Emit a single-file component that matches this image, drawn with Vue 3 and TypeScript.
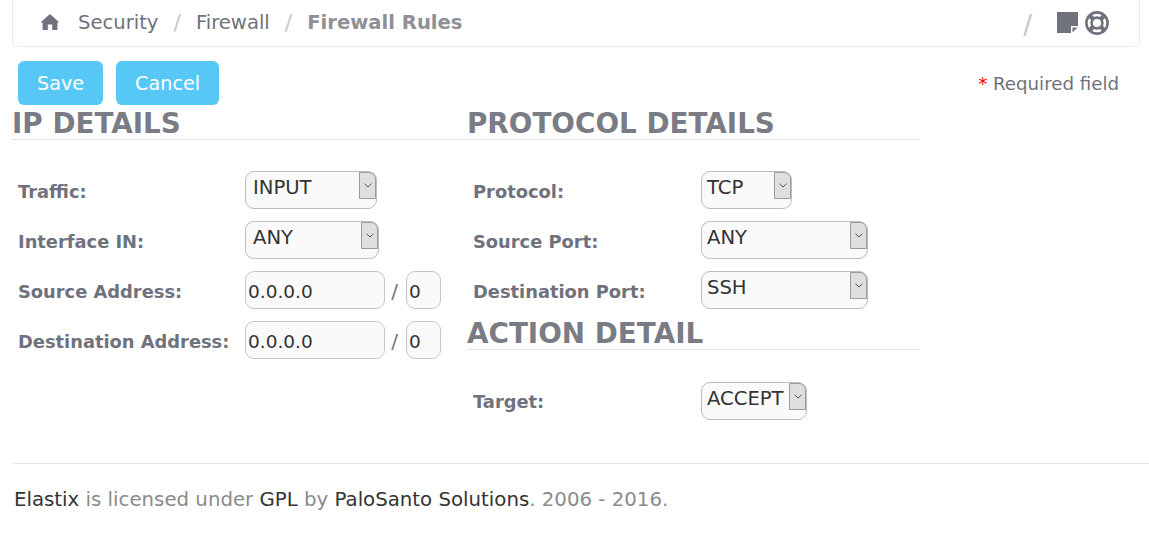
<script setup lang="ts">
interface Row { label: string; kind: 'select' | 'ip'; value: string; width?: number }
const ipRows: Row[] = [
  { label: 'Traffic:', kind: 'select', value: 'INPUT', width: 132 },
  { label: 'Interface IN:', kind: 'select', value: 'ANY', width: 134 },
  { label: 'Source Address:', kind: 'ip', value: '0.0.0.0' },
  { label: 'Destination Address:', kind: 'ip', value: '0.0.0.0' },
]
const protoRows: Row[] = [
  { label: 'Protocol:', kind: 'select', value: 'TCP', width: 91 },
  { label: 'Source Port:', kind: 'select', value: 'ANY', width: 167 },
  { label: 'Destination Port:', kind: 'select', value: 'SSH', width: 167 },
]
const actionRows: Row[] = [{ label: 'Target:', kind: 'select', value: 'ACCEPT', width: 106 }]
const sections = [
  { items: [{ title: 'IP DETAILS', rows: ipRows }] },
  { items: [{ title: 'PROTOCOL DETAILS', rows: protoRows }, { title: 'ACTION DETAIL', rows: actionRows }] },
]
</script>

<template>
  <div class="page">
    <header class="crumbs">
      <svg class="home" viewBox="0 0 20 18" width="20" height="18" aria-hidden="true">
        <path d="M10 1 L19.5 9.6 L17.4 9.6 L17.4 17 L12.2 17 L12.2 11.4 L7.8 11.4 L7.8 17 L2.6 17 L2.6 9.6 L0.5 9.6 Z" fill="#6f727d" />
      </svg>
      <span class="crumb">Security</span><span class="sep">/</span>
      <span class="crumb">Firewall</span><span class="sep">/</span>
      <strong class="current">Firewall Rules</strong>
      <span class="tools">
        <span class="sep tool-sep">/</span>
        <svg viewBox="0 0 21 21" width="21" height="21" aria-hidden="true">
          <path d="M0 0 H21 V14 H14 V21 H0 Z" fill="#6f727d" />
          <path d="M15.5 20.5 V15.5 H20.5 Z" fill="#6f727d" />
        </svg>
        <svg viewBox="0 0 24 24" width="24" height="24" aria-hidden="true">
          <circle cx="12" cy="12" r="10.6" fill="none" stroke="#6f727d" stroke-width="2.6" />
          <circle cx="12" cy="12" r="5.4" fill="none" stroke="#6f727d" stroke-width="2.6" />
          <path d="M4.5 4.5 L8.5 8.5 M19.5 4.5 L15.5 8.5 M4.5 19.5 L8.5 15.5 M19.5 19.5 L15.5 15.5" stroke="#6f727d" stroke-width="4.4" />
        </svg>
      </span>
    </header>

    <div class="actions">
      <button class="btn save">Save</button>
      <button class="btn">Cancel</button>
      <span class="required"><span class="star">*</span> Required field</span>
    </div>

    <main class="form">
      <section v-for="(col, c) in sections" :key="c" class="col" :class="{ right: c === 1 }">
        <div v-for="group in col.items" :key="group.title" class="group">
          <h2 class="title">{{ group.title }}</h2>
          <div class="rows">
            <div v-for="row in group.rows" :key="row.label" class="row">
              <label class="label">{{ row.label }}</label>
              <div v-if="row.kind === 'select'" class="select" :style="{ width: row.width + 'px' }">
                <span class="select-text">{{ row.value }}</span>
                <span class="arrow">
                  <svg viewBox="0 0 8 5" width="8" height="5" aria-hidden="true">
                    <path d="M0.5 0.7 L4 4 L7.5 0.7" fill="none" stroke="#555" stroke-width="1" />
                  </svg>
                </span>
              </div>
              <div v-else class="ip">
                <span class="input wide">{{ row.value }}</span>
                <span class="slash">/</span>
                <span class="input mask">0</span>
              </div>
            </div>
          </div>
        </div>
      </section>
    </main>

    <footer class="footer">
      <a>Elastix</a> is licensed under <a>GPL</a> by <a>PaloSanto Solutions</a>. 2006 - 2016.
    </footer>
  </div>
</template>

<style>
html, body { margin: 0; background: #fff; }
</style>

<style scoped>
.page {
  width: 1149px;
  height: 533px;
  overflow: hidden;
  font-family: "DejaVu Sans", Verdana, sans-serif;
  font-size: 18px;
  color: #6f727d;
  box-sizing: border-box;
}
.crumbs {
  display: flex;
  align-items: center;
  box-sizing: border-box;
  width: 1128px;
  height: 47px;
  margin-left: 12px;
  padding: 0 30px 1px 27px;
  border: 1px solid #ececec;
  border-top: none;
  border-radius: 0 0 6px 6px;
  font-size: 19.6px;
}
.home { margin-right: 18px; margin-top: -1px; }
.crumb { color: #6f727d; }
.sep { color: #c6c8cc; margin: 0 15px; font-size: 22px; }
.current { color: #8f9096; font-weight: bold; }
.tools { margin-left: auto; display: flex; align-items: center; gap: 7px; }
.tool-sep { margin: 4px 18px 0 0; font-size: 26px; }
.actions {
  display: flex;
  align-items: center;
  gap: 13px;
  margin: 14px 30px 0 18px;
  height: 44px;
}
.btn {
  height: 44px;
  padding: 0 19px;
  border: none;
  border-radius: 6px;
  background: #57c8f5;
  color: #fff;
  font: inherit;
  font-size: 19.2px;
}
.required { margin-left: auto; font-size: 18.2px; padding-top: 1px; }
.star { color: #f00; }
.form { display: flex; margin: 2px 0 0 12px; width: 908px; height: 356px; }
.col { flex: 0 0 454px; }
.col.right { margin-left: 1px; flex-basis: 453px; }
.title {
  margin: 0;
  box-sizing: content-box;
  height: 32px;
  line-height: 34px;
  border-bottom: 1px solid #e3e3e3;
  color: #7a7c85;
  font-size: 27.8px;
  font-weight: bold;
  white-space: nowrap;
}
.rows { padding: 25px 0 0 6px; }
.group + .group { margin-top: 2px; }
.group + .group .rows { padding-top: 26px; }
.group + .group .label { margin-top: 0; }
.row { display: flex; align-items: center; height: 50px; }
.label {
  flex: 0 0 227px;
  font-size: 17.85px;
  font-weight: bold;
  margin-top: 2px;
  white-space: nowrap;
}
.right .label { flex-basis: 228px; }
.select {
  box-sizing: border-box;
  height: 38px;
  position: relative;
  border: 1px solid #bcbcbc;
  border-radius: 9px;
  background: #fafafa;
  color: #333;
  padding: 0 0 0 7px;
  font-size: 19.6px;
  line-height: 31px;
  white-space: nowrap;
}
.right .select { padding-left: 5px; }
.arrow {
  position: absolute;
  top: 0;
  right: 0;
  width: 17px;
  height: 27px;
  box-sizing: border-box;
  border: 1px solid #9c9c9c;
  border-top-right-radius: 7px;
  background: #dfdfdf;
  display: flex;
  align-items: center;
  justify-content: center;
}
.ip { display: flex; align-items: center; }
.input {
  box-sizing: border-box;
  height: 38px;
  line-height: 40px;
  border: 1px solid #c6c6c6;
  border-radius: 9px;
  background: #fafafa;
  color: #333;
  padding-left: 2px;
  font-size: 18.5px;
}
.wide { width: 140px; }
.mask { width: 35px; }
.slash { width: 21px; text-align: center; font-size: 20px; margin-top: 2px; margin-left: -1px; margin-right: 1px; }
.footer {
  box-sizing: border-box;
  margin-left: 13px;
  width: 1136px;
  border-top: 1px solid #e6e6e6;
  padding: 23px 0 0 1px;
  font-size: 19.75px;
  line-height: 25px;
  color: #8b8b8b;
}
.footer a { color: #333; }
</style>
